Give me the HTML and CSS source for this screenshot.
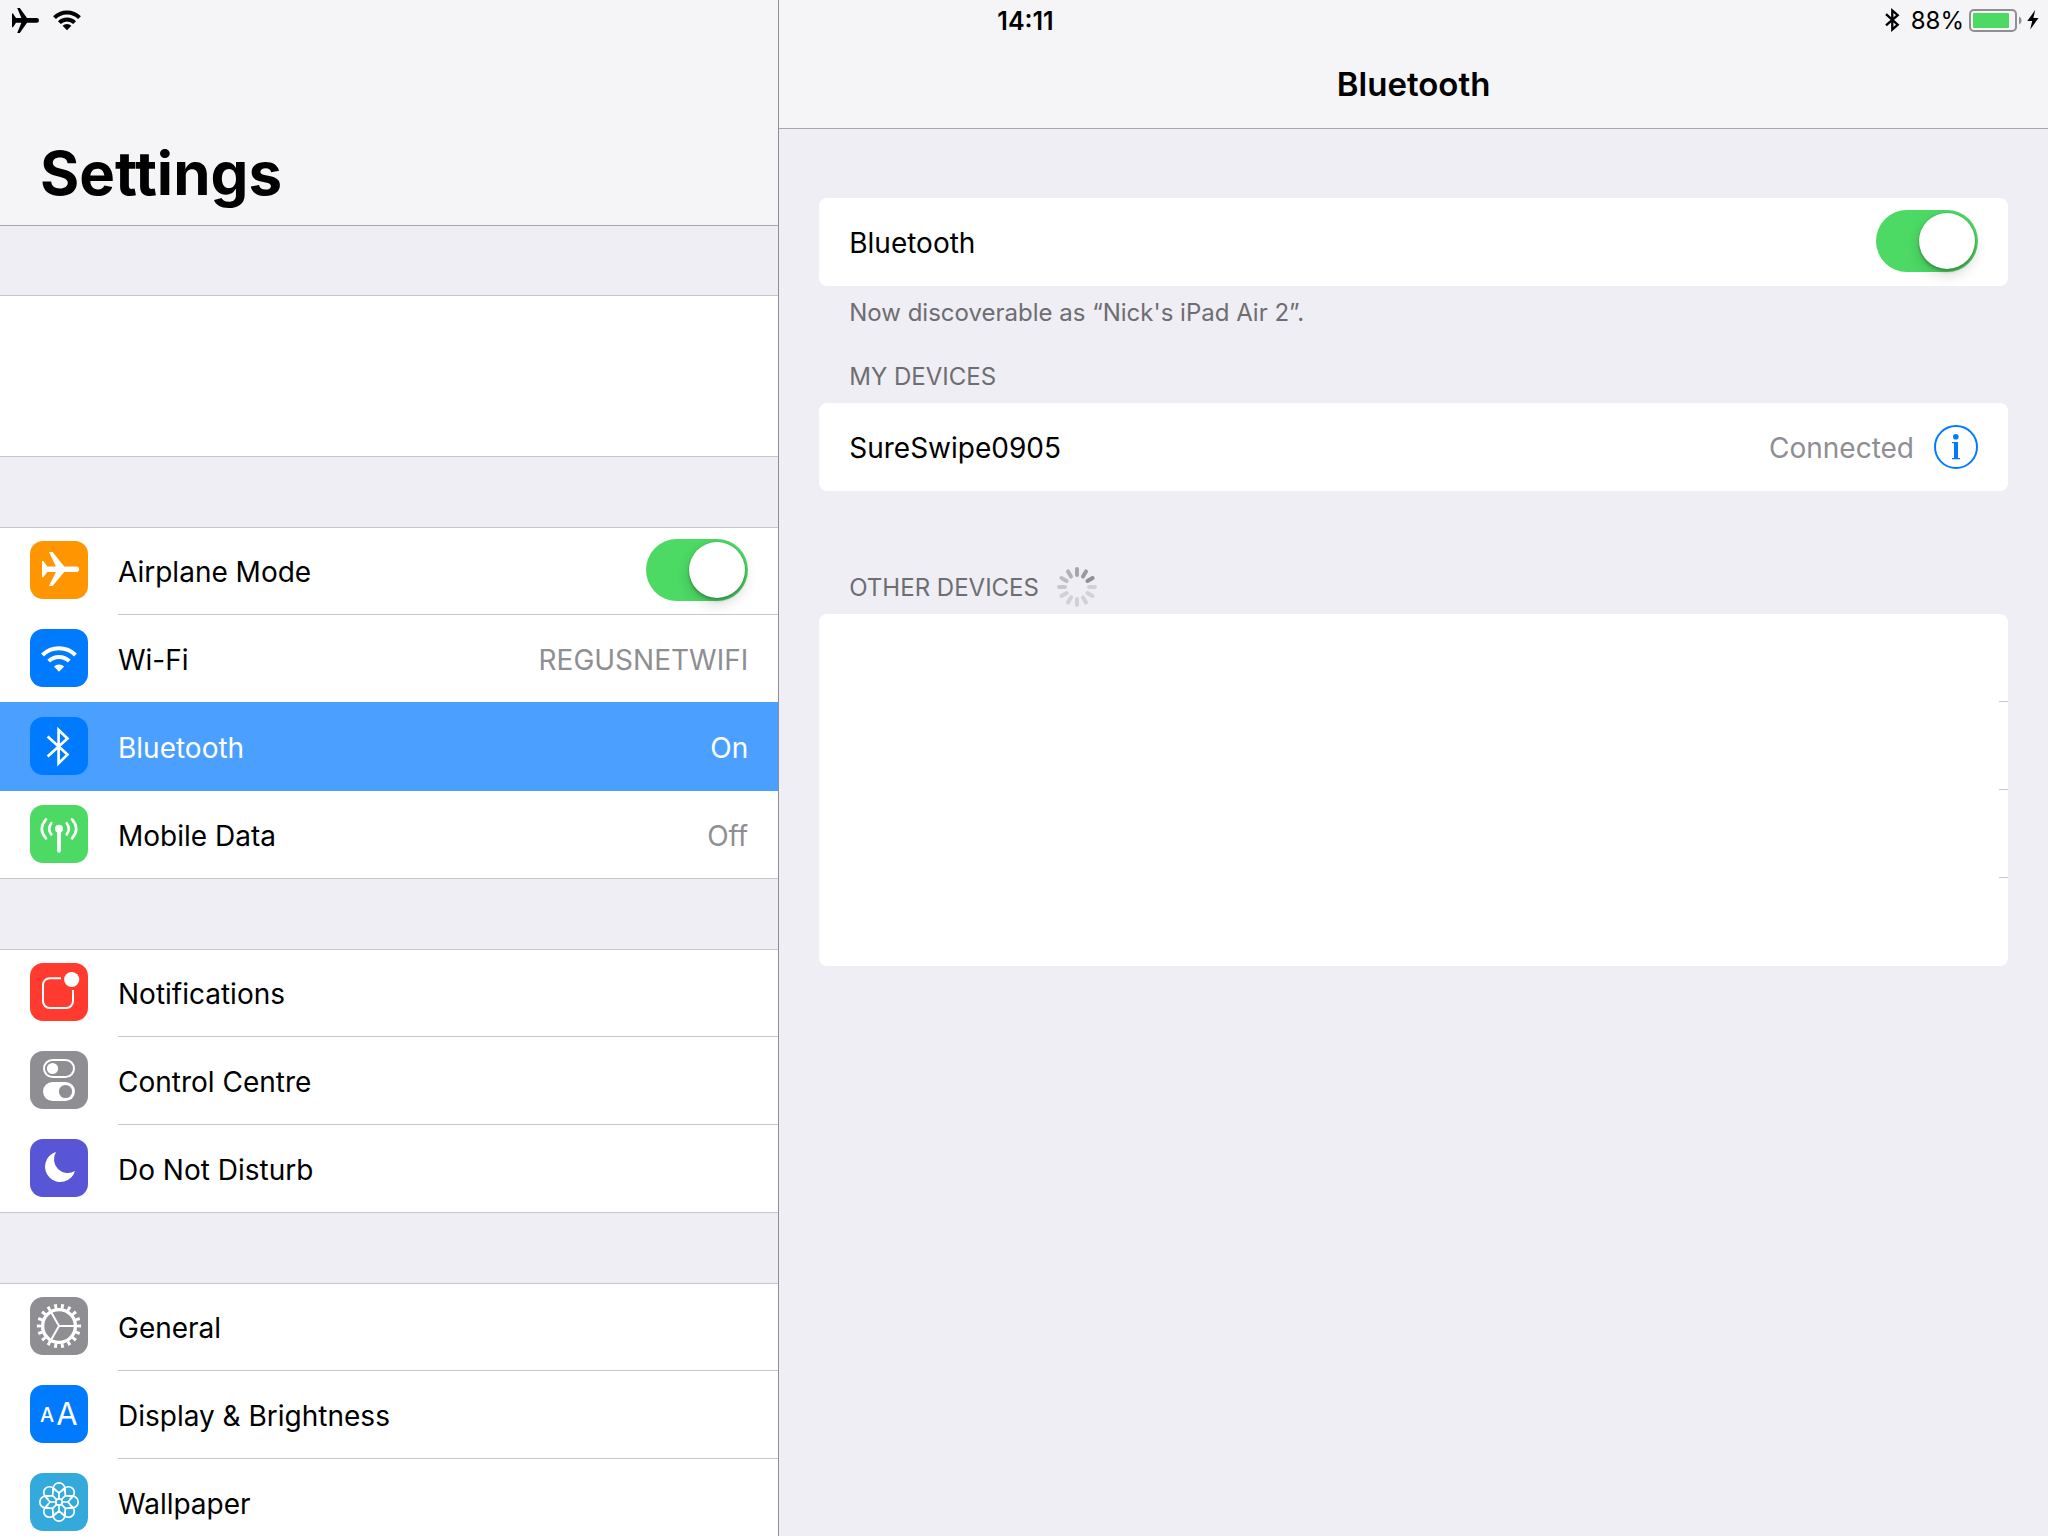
FILE: index.html
```html
<!DOCTYPE html>
<html lang="en-GB">
<head>
<meta charset="utf-8">
<meta name="viewport" content="width=device-width, initial-scale=1">
<title>Settings – Bluetooth</title>
<link rel="stylesheet" href="styles.css">
</head>
<body>
<div class="status-bar">
  <div class="status-left">
    <svg width="27" height="25" viewBox="0 0 27 25" role="img" aria-label="Airplane mode"><path d="M0 5.5h1L4 10h5.4L5.2 0h2.6L15 10h9.6a2.4 2.4 0 0 1 0 4.8H15L7.8 25H5.2l4.2-10.2H4l-3 4.4H0z"/></svg>
    <svg width="28" height="21" viewBox="0 0 28 21" role="img" aria-label="Wi-Fi"><g fill="none" stroke="#000" stroke-width="4"><path d="M1.5 7.6a17.7 17.7 0 0 1 25 0"/><path d="M6.4 12.6a10.8 10.8 0 0 1 15.2 0"/></g><path d="M9.6 15.8a6.2 6.2 0 0 1 8.8 0L14 20.2z"/></svg>
  </div>
  <time class="clock">14:11</time>
  <div class="status-right">
    <svg class="status-bt" width="15" height="24" viewBox="0 0 15 24" role="img" aria-label="Bluetooth"><path d="M1 17.3 12.7 7.2 7.3 2.5v19l5.4-4.8L1 6.2" fill="none" stroke="#000" stroke-width="2.3"/></svg>
    <span class="percent">88%</span>
    <svg width="53" height="23" viewBox="0 0 53 23" aria-hidden="true"><rect x="1" y="1" width="46" height="21" rx="4" fill="none" stroke="#8e8e93" stroke-width="2"/><rect x="4" y="4" width="36" height="15" rx="1" fill="#4cd964"/><path d="M50 7.5a4.4 4.4 0 0 1 0 8z" fill="#8e8e93"/></svg>
    <svg width="12" height="20" viewBox="0 0 12 20" role="img" aria-label="Charging"><path d="M8.2 0 .3 11h4.9L3.2 19.5 11.5 8H6.4z"/></svg>
  </div>
</div>

<div class="split">
  <nav class="sidebar" aria-label="Settings">
    <header class="sidebar-head"><h1>Settings</h1></header>
    <div class="groups">
      <div class="group group-blank"></div>

      <ul class="group">
        <li class="row">
          <svg class="icon" viewBox="0 0 58 58" aria-hidden="true"><rect width="58" height="58" rx="13" fill="#ff9500"/><path fill="#fff" d="M12 20h1.3l4 5.4h8.6L19 11h3.6L34.2 25.4H46.3a2.8 2.8 0 0 1 0 5.6H34.2L22.6 45H19l6.9-14h-8.6l-4 5.2H12z"/></svg>
          <div class="cell"><label class="title" for="airplane">Airplane Mode</label><input class="toggle" type="checkbox" role="switch" id="airplane" checked></div>
        </li>
        <li><a class="row" href="#wifi">
          <svg class="icon" viewBox="0 0 58 58" aria-hidden="true"><rect width="58" height="58" rx="13" fill="#007aff"/><g fill="none" stroke="#fff" stroke-width="4"><path d="M12.5 26a23.3 23.3 0 0 1 33 0"/><path d="M18.7 32.2a14.5 14.5 0 0 1 20.6 0"/></g><path fill="#fff" d="M23.9 37.6a7.2 7.2 0 0 1 10.2 0L29 42.7z"/></svg>
          <div class="cell"><span class="title">Wi-Fi</span><span class="value">REGUSNETWIFI</span></div>
        </a></li>
        <li><a class="row selected" href="#bluetooth" aria-current="page">
          <svg class="icon" viewBox="0 0 58 58" aria-hidden="true"><rect width="58" height="58" rx="13" fill="#007aff"/><path d="M17.6 39.4 37.5 21.4 28.6 13v33.2l8.9-8.6L17.6 19.6" fill="none" stroke="#fff" stroke-width="2.7"/></svg>
          <div class="cell"><span class="title">Bluetooth</span><span class="value">On</span></div>
        </a></li>
        <li><a class="row" href="#mobile">
          <svg class="icon" viewBox="0 0 58 58" aria-hidden="true"><rect width="58" height="58" rx="13" fill="#4cd964"/><circle cx="29" cy="23.8" r="4" fill="#fff"/><g fill="none" stroke="#fff" stroke-width="2.6" stroke-linecap="round"><path d="M21.3 18.2q-4.2 5.6 0 11.2M16 14.3q-8.4 9.6 0 19M36.7 18.2q4.2 5.6 0 11.2M42 14.3q8.4 9.6 0 19"/><path d="M29 25v20.8" stroke-width="3.8"/></g></svg>
          <div class="cell"><span class="title">Mobile Data</span><span class="value">Off</span></div>
        </a></li>
      </ul>

      <ul class="group">
        <li><a class="row" href="#notifications">
          <svg class="icon" viewBox="0 0 58 58" aria-hidden="true"><rect width="58" height="58" rx="13" fill="#ff3b30"/><path d="M31 15.2H19.7a6.7 6.7 0 0 0-6.7 6.7v16.4a6.7 6.7 0 0 0 6.7 6.7h16.6a6.7 6.7 0 0 0 6.7-6.7V27" fill="none" stroke="#fff" stroke-width="2"/><circle cx="41.7" cy="16.5" r="7.6" fill="#fff"/></svg>
          <div class="cell"><span class="title">Notifications</span></div>
        </a></li>
        <li><a class="row" href="#control-centre">
          <svg class="icon" viewBox="0 0 58 58" aria-hidden="true"><rect width="58" height="58" rx="13" fill="#8e8e93"/><rect x="14" y="9" width="30" height="17" rx="8.5" fill="none" stroke="#fff" stroke-width="2"/><circle cx="22.5" cy="17.5" r="5.6" fill="#fff"/><rect x="13" y="31" width="32" height="19" rx="9.5" fill="#fff"/><circle cx="35.5" cy="40.5" r="6.6" fill="#8e8e93"/></svg>
          <div class="cell"><span class="title">Control Centre</span></div>
        </a></li>
        <li><a class="row" href="#do-not-disturb">
          <svg class="icon" viewBox="0 0 58 58" aria-hidden="true"><rect width="58" height="58" rx="13" fill="#5856d6"/><path fill="#fff" d="M26 13a15.3 15.3 0 1 0 19 19A13.8 13.8 0 0 1 26 13z"/></svg>
          <div class="cell"><span class="title">Do Not Disturb</span></div>
        </a></li>
      </ul>

      <ul class="group">
        <li><a class="row" href="#general">
          <svg class="icon" viewBox="0 0 58 58" aria-hidden="true"><rect width="58" height="58" rx="13" fill="#8e8e93"/><g fill="none" stroke="#fff"><circle cx="29" cy="29" r="16.4" stroke-width="3.4"/><circle cx="29" cy="29" r="19.8" stroke-width="4.6" pathLength="180" stroke-dasharray="4.2 5.8" stroke-dashoffset="2.1"/><path d="M29 29h16M29 29l-8-13.9M29 29l-8 13.9" stroke-width="2"/></g></svg>
          <div class="cell"><span class="title">General</span></div>
        </a></li>
        <li><a class="row" href="#display">
          <svg class="icon" viewBox="0 0 58 58" aria-hidden="true"><rect width="58" height="58" rx="13" fill="#007aff"/><g fill="#fff"><text class="glyph-small" x="17" y="37">A</text><text class="glyph-large" x="37" y="40">A</text></g></svg>
          <div class="cell"><span class="title">Display &amp; Brightness</span></div>
        </a></li>
        <li><a class="row" href="#wallpaper">
          <svg class="icon" viewBox="0 0 58 58" aria-hidden="true"><defs><path id="petal" d="M-5.8-9.5V-13.4a5.8 5.8 0 0 1 11.6 0V-9.5M-5-13.4 0-9l5-4.4M0-9v5.6"/></defs><rect width="58" height="58" rx="13" fill="#34aadc"/><g transform="translate(29 29)" fill="none" stroke="#fff" stroke-width="1.7"><circle r="3.2"/><use href="#petal"/><use href="#petal" transform="rotate(45)"/><use href="#petal" transform="rotate(90)"/><use href="#petal" transform="rotate(135)"/><use href="#petal" transform="rotate(180)"/><use href="#petal" transform="rotate(225)"/><use href="#petal" transform="rotate(270)"/><use href="#petal" transform="rotate(315)"/></g></svg>
          <div class="cell"><span class="title">Wallpaper</span></div>
        </a></li>
      </ul>
    </div>
  </nav>

  <main class="detail">
    <header class="detail-head"><h2>Bluetooth</h2></header>
    <div class="detail-body">
      <section>
        <div class="card device">
          <label class="title" for="bt">Bluetooth</label>
          <input class="toggle" type="checkbox" role="switch" id="bt" checked>
        </div>
        <p class="note footnote">Now discoverable as “Nick's iPad Air 2”.</p>
      </section>
      <section class="my-devices">
        <h3 class="note heading">MY DEVICES</h3>
        <div class="card device">
          <span class="title">SureSwipe0905</span>
          <span class="value">Connected</span>
          <button class="info" type="button" aria-label="More info">
            <svg width="44" height="44" viewBox="0 0 44 44" aria-hidden="true"><circle cx="22" cy="22" r="21" fill="none" stroke="#007aff" stroke-width="2"/><circle cx="21.8" cy="11.8" r="2.8" fill="#007aff"/><path fill="#007aff" d="M18 17h6v16h2v1.2h-8V33h2V18.200h-2z"/></svg>
          </button>
        </div>
      </section>
      <section class="other-devices">
        <h3 class="note heading">OTHER DEVICES
          <svg class="spinner" viewBox="-20 -20 40 40" role="img" aria-label="Searching"><g stroke-width="4" stroke-linecap="round"><path stroke="#a5a5aa" d="M0-18v6"/><path stroke="#99999e" d="M0-18v6" transform="rotate(30)"/><path stroke="#8f8f94" d="M0-18v6" transform="rotate(60)"/><path stroke="#d1d1d6" d="M0-18v6" transform="rotate(90)"/><path stroke="#d1d1d6" d="M0-18v6" transform="rotate(120)"/><path stroke="#d1d1d6" d="M0-18v6" transform="rotate(150)"/><path stroke="#d1d1d6" d="M0-18v6" transform="rotate(180)"/><path stroke="#d1d1d6" d="M0-18v6" transform="rotate(210)"/><path stroke="#d1d1d6" d="M0-18v6" transform="rotate(240)"/><path stroke="#c7c7cc" d="M0-18v6" transform="rotate(270)"/><path stroke="#bcbcc1" d="M0-18v6" transform="rotate(300)"/><path stroke="#b1b1b6" d="M0-18v6" transform="rotate(330)"/></g></svg>
        </h3>
        <ul class="card found">
          <li></li><li></li><li></li><li></li>
        </ul>
      </section>
    </div>
  </main>
</div>
</body>
</html>
```

FILE: styles.css
```css
:root {
  --line: #c8c7cc;
  --bar-line: #a7a7ab;
  --bar: #f5f5f7;
  --page: #efeef4;
  --muted: #8e8e93;
  --green: #4cd964;
}

* { box-sizing: border-box; }

body {
  margin: 0;
  background: var(--page);
  color: #000;
  font: 400 28px/36px Inter, "Liberation Sans", sans-serif;
}

h1, h2, h3, p, ul { margin: 0; padding: 0; }
ul { list-style: none; }
svg { display: block; flex: none; }

/* Status bar floats over both panes */
.status-bar {
  position: absolute;
  inset: 0 0 auto;
  z-index: 1;
  display: grid;
  grid-template-columns: 1fr auto 1fr;
  align-items: center;
  height: 40px;
  padding: 0 9px 0 12px;
  font-size: 24px;
  line-height: 32px;
}
.status-left { display: flex; align-items: center; gap: 14px; }
.status-right { display: flex; align-items: center; justify-content: flex-end; gap: 5px; }
.status-bt { margin-right: 6px; }
.clock { padding-top: 2px; font-size: 25px; font-weight: 600; }
.percent { padding-top: 2px; }

.split { display: flex; height: 100vh; overflow: hidden; }

.sidebar {
  flex: none;
  display: flex;
  flex-direction: column;
  width: 38%;
  min-height: 0;
}
.sidebar-head {
  flex: none;
  display: flex;
  align-items: flex-end;
  height: 226px;
  padding: 0 40px 16px;
  background: var(--bar);
  border-bottom: 1px solid var(--bar-line);
}
h1 { font-size: 60px; line-height: 72px; font-weight: 700; }

.groups {
  flex: 1;
  min-height: 0;
  overflow: auto;
  scrollbar-width: none;
  display: flex;
  flex-direction: column;
  gap: 70px;
  padding-top: 69px;
}
.group {
  flex: none;
  background: #fff;
  box-shadow: inset 0 1px var(--line), inset 0 -1px var(--line);
}
.group-blank { height: 162px; }

.row {
  display: flex;
  align-items: center;
  gap: 30px;
  height: 88px;
  padding-left: 30px;
  color: inherit;
  text-decoration: none;
}
.icon { width: 58px; height: 58px; margin-bottom: 2px; }
.cell {
  flex: 1;
  display: flex;
  align-items: center;
  height: 88px;
  padding: 0 30px 1px 0;
  border-bottom: 1px solid var(--line);
}
.group li:last-child .cell { border-color: transparent; }
.title { flex: 1; padding-top: 4px; }
.value { padding-top: 4px; color: var(--muted); }

/* The highlight also covers the separator of the row above */
.selected { position: relative; background: #4ba0ff; box-shadow: 0 -1px #4ba0ff; color: #fff; }
.selected .cell { border-color: transparent; }
.selected .value { color: inherit; }

.glyph-small, .glyph-large { text-anchor: middle; }
.glyph-small { font-size: 20px; font-weight: 500; }
.glyph-large { font-size: 31px; }

.toggle {
  appearance: none;
  flex: none;
  display: flex;
  width: 102px;
  height: 62px;
  margin: 0;
  padding: 3px;
  border-radius: 31px;
  background: #e5e5ea;
}
.toggle::before {
  content: "";
  width: 56px;
  height: 56px;
  border-radius: 50%;
  background: #fff;
  box-shadow: 0 6px 14px rgba(0, 0, 0, .15), 0 3px 3px rgba(0, 0, 0, .2), 0 0 2px rgba(0, 0, 0, .2);
}
.toggle:checked { justify-content: flex-end; background: var(--green); }

.detail {
  flex: 1;
  min-width: 0;
  border-left: 1px solid #8e8e93;
}
.detail-head {
  height: 129px;
  padding-top: 62px;
  background: var(--bar);
  border-bottom: 1px solid var(--bar-line);
  text-align: center;
}
h2 { font-size: 33px; line-height: 44px; font-weight: 600; }

.detail-body { padding: 69px 40px 0; }
.card { background: #fff; border-radius: 8px; }
.device {
  display: flex;
  align-items: center;
  height: 88px;
  padding: 0 30px 2px;
}
.note {
  padding: 0 30px;
  color: #6d6d72;
  font-size: 24px;
  line-height: 32px;
  font-weight: 400;
}
.footnote { padding-top: 11px; }
.my-devices { padding-top: 31px; }
.other-devices { padding-top: 80px; }
.heading { display: flex; align-items: center; gap: 18px; height: 43px; padding-bottom: 10px; }
.spinner { width: 40px; height: 40px; margin-bottom: 2px; }

.info {
  margin: 1px 0 0 20px;
  padding: 0;
  border: 0;
  background: none;
}
.found li { height: 88px; padding-top: 87px; }
.found li:not(:last-child)::after {
  content: "";
  display: block;
  width: 9px;
  height: 1px;
  margin-left: auto;
  background: var(--line);
}
```
